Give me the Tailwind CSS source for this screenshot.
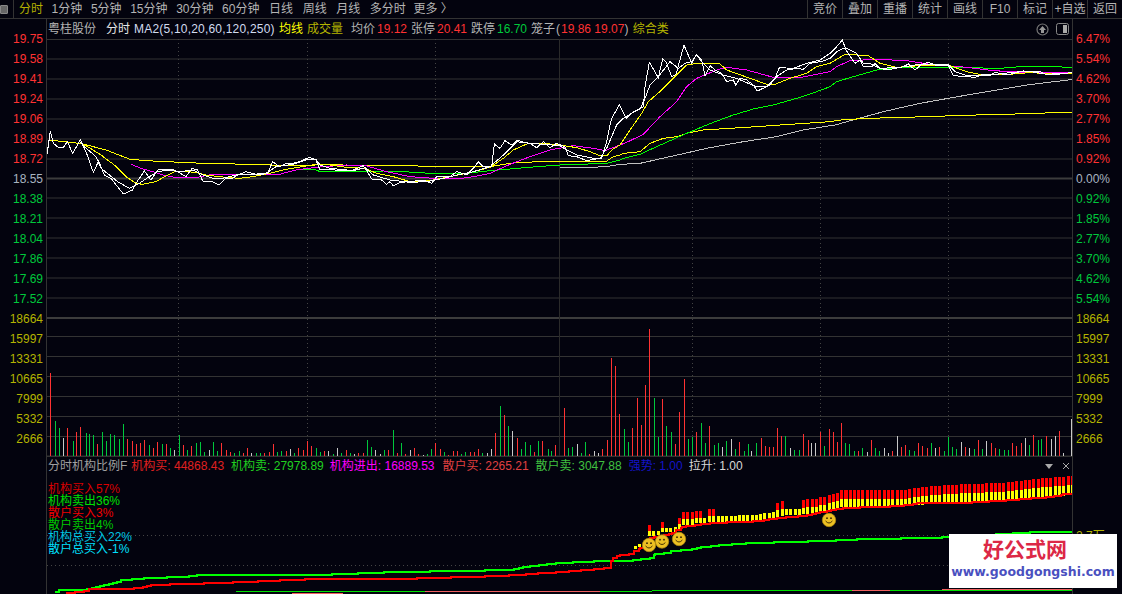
<!DOCTYPE html>
<html lang="zh-CN">
<head>
    <meta charset="UTF-8">
    <title>分时</title>
    <script src="https://cdn.jsdelivr.net/npm/@tailwindcss/browser@4"></script>
</head>
<body class="bg-[#03030e]">
<div class="relative w-[1122px] h-[594px] overflow-hidden bg-[#03030e] text-[12px] leading-[18px] text-[#b4b4b4] font-['Liberation_Sans','Noto_Sans_CJK_SC',sans-serif]">

    <!-- top bar -->
    <div class="flex h-[19px] border-b border-[#333]">
        <div class="flex items-center w-[14px] border-r border-[#333]">
            <div class="w-[8px] h-[9px] rounded-[1px] border border-[#888] bg-[#666]"></div>
        </div>
        <div class="flex gap-[8.6px] pl-[5px]">
            <span class="text-[#b4b000]">分时</span>
            <span>1分钟</span>
            <span>5分钟</span>
            <span>15分钟</span>
            <span>30分钟</span>
            <span>60分钟</span>
            <span class="ml-[1px]">日线</span>
            <span class="ml-[1px]">周线</span>
            <span class="ml-[1px]">月线</span>
            <span class="ml-[1px]">多分时</span>
            <span class="ml-[-1px]">更多 〉</span>
        </div>
        <div class="flex ml-auto">
            <span class="w-[35px] text-center border-l border-[#333]">竞价</span>
            <span class="w-[35px] text-center border-l border-[#333]">叠加</span>
            <span class="w-[35px] text-center border-l border-[#333]">重播</span>
            <span class="w-[35px] text-center border-l border-[#333]">统计</span>
            <span class="w-[35px] text-center border-l border-[#333]">画线</span>
            <span class="w-[35px] text-center border-l border-[#333]">F10</span>
            <span class="w-[35px] text-center border-l border-[#333]">标记</span>
            <span class="w-[35px] text-center border-l border-[#333]">+自选</span>
            <span class="w-[35px] text-center border-l border-[#333]">返回</span>
        </div>
    </div>

    <div class="flex h-[575px]">
        <!-- left axis -->
        <div class="w-[47px] shrink-0 border-r border-[#333] pt-[11px] pr-[3px] text-right">
            <div class="h-[20px] text-[#ff3232]">19.75</div>
            <div class="h-[20px] text-[#ff3232]">19.58</div>
            <div class="h-[20px] text-[#ff3232]">19.41</div>
            <div class="h-[20px] text-[#ff3232]">19.24</div>
            <div class="h-[20px] text-[#ff3232]">19.06</div>
            <div class="h-[20px] text-[#ff3232]">18.89</div>
            <div class="h-[20px] text-[#ff3232]">18.72</div>
            <div class="h-[20px] text-[#a8b4c0]">18.55</div>
            <div class="h-[20px] text-[#00c83c]">18.38</div>
            <div class="h-[20px] text-[#00c83c]">18.21</div>
            <div class="h-[20px] text-[#00c83c]">18.04</div>
            <div class="h-[20px] text-[#00c83c]">17.86</div>
            <div class="h-[20px] text-[#00c83c]">17.69</div>
            <div class="h-[20px] text-[#00c83c]">17.52</div>
            <div class="h-[20px] text-[#b4b400]">18664</div>
            <div class="h-[20px] text-[#b4b400]">15997</div>
            <div class="h-[20px] text-[#b4b400]">13331</div>
            <div class="h-[20px] text-[#b4b400]">10665</div>
            <div class="h-[20px] text-[#b4b400]">7999</div>
            <div class="h-[20px] text-[#b4b400]">5332</div>
            <div class="h-[20px] text-[#b4b400]">2666</div>
        </div>

        <!-- chart column -->
        <div class="flex flex-col w-[1025px] shrink-0">
            <div class="flex h-[20px] pl-[1px] pt-[1px] whitespace-pre">
                <span class="w-[58px] text-[#b4b4b4]">粤桂股份</span>
                <span class="w-[28px] text-[#e6e6e6]">分时</span>
                <span class="w-[145px] tracking-[0.2px] text-[#d2dcf0]">MA2(5,10,20,60,120,250)</span>
                <span class="w-[28px] text-[#ffff00]">均线</span>
                <span class="w-[44px] text-[#b4b400]">成交量</span>
                <span class="w-[26px]">均价</span>
                <span class="w-[34px] text-[#ff3232]">19.12</span>
                <span class="w-[26px]">张停</span>
                <span class="w-[34px] text-[#ff3232]">20.41</span>
                <span class="w-[26px]">跌停</span>
                <span class="w-[34px] text-[#00c83c]">16.70</span>
                <span class="w-[25px]">笼子</span>
                <span>(</span>
                <span class="ml-[1px] text-[#ff3232]">19.86 19.07</span>
                <span>) </span>
                <span class="ml-[1px] text-[#b4b400]">综合类</span>
                <div class="flex items-center gap-[7px] ml-auto pr-[3px] pb-[1px]">
                    <svg width="13" height="13" viewBox="0 0 13 13"><circle cx="6.5" cy="6.5" r="5.5" fill="none" stroke="#777" stroke-width="1.2"/><path d="M6.5 3 L10 7 H8 V10 H5 V7 H3 Z" fill="#999"/></svg>
                    <svg width="13" height="12" viewBox="0 0 13 12"><rect x=".5" y=".5" width="12" height="11" rx="2" fill="none" stroke="#888"/><rect x="7" y="2" width="4" height="8" fill="#aaa"/></svg>
                </div>
            </div>

            <svg id="main" class="block" width="1025" height="417" viewBox="47 39 1025 417"></svg>

            <div class="flex gap-[6px] h-[19px] pl-[1px] border-t border-[#333] whitespace-pre">
                <span class="text-[#a0a0a0] mr-[-2px]">分时机构比例F</span>
                <span class="text-[#e02020]">机构买: 44868.43</span>
                <span class="ml-[1px] text-[#20d020]">机构卖: 27978.89</span>
                <span class="text-[#ff00ff]">机构进出: 16889.53</span>
                <span class="ml-[2px] text-[#e04040]">散户买: 2265.21</span>
                <span class="ml-[1px] text-[#40c040]">散户卖: 3047.88</span>
                <span class="ml-[1px] text-[#1414c8]">强势: 1.00</span>
                <span class="text-[#d8d8d8]">拉升: 1.00</span>
                <div class="flex items-center gap-[9px] ml-auto pr-[2px]">
                    <span class="w-0 h-0 border-x-[4px] border-t-[5px] border-x-transparent border-t-[#aaa]"></span>
                    <svg width="8" height="8" viewBox="0 0 8 8"><path d="M1 1 L7 7 M7 1 L1 7" stroke="#aaa"/></svg>
                </div>
            </div>

            <div class="relative">
                <svg id="lower" class="block" width="1025" height="119" viewBox="47 475 1025 119"></svg>
                <div class="absolute left-[1px] top-[8px] leading-[12px]">
                    <div class="text-[#d80000]">机构买入57%</div>
                    <div class="text-[#00e000]">机构卖出36%</div>
                    <div class="text-[#f00000]">散户买入3%</div>
                    <div class="text-[#00c800]">散户卖出4%</div>
                    <div class="text-[#00c8e6]">机构总买入22%</div>
                    <div class="text-[#00e0ff]">散户总买入-1%</div>
                </div>
            </div>
        </div>

        <!-- right axis -->
        <div class="flex-1 border-l border-[#333] pt-[11px] pl-[3px]">
            <div class="h-[20px] text-[#ff3232]">6.47%</div>
            <div class="h-[20px] text-[#ff3232]">5.54%</div>
            <div class="h-[20px] text-[#ff3232]">4.62%</div>
            <div class="h-[20px] text-[#ff3232]">3.70%</div>
            <div class="h-[20px] text-[#ff3232]">2.77%</div>
            <div class="h-[20px] text-[#ff3232]">1.85%</div>
            <div class="h-[20px] text-[#ff3232]">0.92%</div>
            <div class="h-[20px] text-[#a8b4c0]">0.00%</div>
            <div class="h-[20px] text-[#00c83c]">0.92%</div>
            <div class="h-[20px] text-[#00c83c]">1.85%</div>
            <div class="h-[20px] text-[#00c83c]">2.77%</div>
            <div class="h-[20px] text-[#00c83c]">3.70%</div>
            <div class="h-[20px] text-[#00c83c]">4.62%</div>
            <div class="h-[20px] text-[#00c83c]">5.54%</div>
            <div class="h-[20px] text-[#b4b400]">18664</div>
            <div class="h-[20px] text-[#b4b400]">15997</div>
            <div class="h-[20px] text-[#b4b400]">13331</div>
            <div class="h-[20px] text-[#b4b400]">10665</div>
            <div class="h-[20px] text-[#b4b400]">7999</div>
            <div class="h-[20px] text-[#b4b400]">5332</div>
            <div class="h-[20px] text-[#b4b400]">2666</div>
            <div class="mt-[77px] text-[#b4b400]">2.7万</div>
        </div>
    </div>

    <!-- watermark -->
    <div class="absolute left-[949px] top-[534px] w-[168px] h-[54px] bg-white text-center">
        <div class="mt-[3px] pr-[16px] text-[21px] leading-[26px] font-bold text-[#dc2846]">好公式网</div>
        <div class="mt-[1px] text-[12.5px] leading-[16px] font-bold text-[#4a50c0] font-['DejaVu_Sans',sans-serif]">www.goodgongshi.com</div>
    </div>
</div>

<script>
    const SVGNS = 'http://www.w3.org/2000/svg';
    const main = document.getElementById('main');
    const lower = document.getElementById('lower');

    function add(parent, tag, attrs) {
        const el = document.createElementNS(SVGNS, tag);
        for (const k in attrs) el.setAttribute(k, attrs[k]);
        parent.appendChild(el);
        return el;
    }

    // grid
    const priceY = [39.5, 59, 79, 99, 119, 139, 159, 198, 218, 238, 258, 278, 298];
    const volY = [336.5, 356.5, 376.5, 396.5, 416.5, 436.5];
    priceY.concat(volY).forEach(y => add(main, 'line', { x1: 47, x2: 1072, y1: y, y2: y, stroke: '#333' }));
    [178.5, 318].forEach(y => add(main, 'line', { x1: 47, x2: 1072, y1: y, y2: y, stroke: '#3c3c3c', 'stroke-width': 2 }));
    add(main, 'line', { x1: 47, x2: 1072, y1: 456, y2: 456, stroke: '#333' });
    [178.5, 307.5, 435.5, 692.5, 820.5, 948.5].forEach(x => add(main, 'line', { x1: x, x2: x, y1: 39, y2: 456, stroke: '#444', 'stroke-dasharray': '1 3' }));
    add(main, 'line', { x1: 559.5, x2: 559.5, y1: 39, y2: 456, stroke: '#2a2a2a' });
    [535.5, 565.5].forEach(y => add(lower, 'line', { x1: 47, x2: 1072, y1: y, y2: y, stroke: '#444', 'stroke-dasharray': '1 3' }));

    // traced from the chart, grouped by the region they were read in
    function region(ox, oy, pts) {
        const out = [];
        for (let i = 0; i < pts.length; i += 2) out.push([ox + pts[i] / 3, oy + pts[i + 1] / 3]);
        return out;
    }
    function line(parts, color) {
        const pts = [];
        parts.forEach(([ox, oy, raw]) => region(ox, oy, raw).forEach(p => {
            if (!pts.length || p[0] > pts[pts.length - 1][0]) pts.push(p);
        }));
        add(main, 'polyline', {
            points: pts.map(p => p.join(',')).join(' '), fill: 'none', stroke: color,
            'stroke-width': 1, 'shape-rendering': 'crispEdges'
        });
    }
    const A = [46, 125], B = [310, 125], C = [590, 35], D = [820, 35];

    line([[...B, [750,127,840,127,890,125,930,118]],
          [...C, [0,400,70,398,150,385,240,365,350,340,460,320,560,305,640,285,720,272]],
          [...D, [45,270,110,252,190,230,300,205,385,190,470,175,620,150,760,133]]], '#c0c0c0');

    line([[...A, [10,45,100,55,130,62,180,75,250,102,300,107,360,110,430,113,470,115,660,119,700,122,810,120]],
          [...B, [0,113,50,118,100,120,470,125,540,125,600,115,640,112,745,108,890,108,910,95,930,90]],
          [...C, [0,378,50,378,70,360,100,355,150,350,180,325,220,310,260,305,290,295,340,285,420,280,500,275,600,268,720,260]],
          [...D, [0,262,70,254,150,250,240,247,330,245,420,241,520,239,620,236,760,231]]], '#ffff00');

    line([[...A, [765,132,810,135]],
          [...B, [30,140,160,140,220,138,280,140,360,145,470,145,540,137,600,132,680,125,750,120,890,115,930,105]],
          [...C, [0,383,50,383,100,370,150,358,200,335,290,295,370,262,430,240,490,222,550,210,620,190,680,170,720,155]],
          [...D, [0,165,50,140,100,125,170,105,240,97,385,97,540,100,600,95,690,95,760,97]]], '#00ff00');

    line([[...A, [255,118,285,130,320,140,350,150,385,157,450,158,490,150,560,148,640,150,700,148,750,135,810,127]],
          [...B, [0,125,40,125,110,120,170,123,230,140,300,155,370,160,440,162,490,155,540,145,600,118,660,95,720,75,790,62,850,70,885,77,930,60]],
          [...C, [0,340,30,345,70,340,110,322,160,298,210,245,260,200,290,155,320,130,380,105,410,97,470,105,550,127,630,128,720,110]],
          [...D, [0,118,50,95,90,77,170,73,260,77,330,88,440,97,520,107,610,112,760,113]]], '#ff00ff');

    line([[...A, [103,55,130,68,165,90,205,120,240,155,270,175,290,178,330,170,355,155,385,140,420,140,450,142,480,150,520,155,580,160,620,155,670,145,710,135,750,128,810,118]],
          [...B, [0,115,60,120,110,127,165,130,200,145,250,155,300,170,360,167,420,155,470,145,540,127,580,100,610,75,650,57,700,55,750,60,800,68,840,80,870,92,890,93,905,75,930,60]],
          [...C, [0,355,25,362,45,350,80,325,120,285,155,235,175,200,215,165,255,125,290,90,320,85,390,87,410,105,480,130,530,148,555,148,600,130,650,115,680,95,720,85]],
          [...D, [0,90,30,85,75,58,145,62,180,85,230,97,300,92,385,90,440,110,490,120,580,117,640,112,670,117,760,115]]], '#ffff00');

    line([[...A, [103,50,115,65,150,95,165,130,190,150,215,170,250,190,280,175,310,155,335,140,370,135,400,140,440,135,470,150,500,160,530,160,570,150,620,148,660,145,690,125,740,118,780,105,810,103]],
          [...B, [0,100,30,120,60,130,130,137,165,128,190,150,240,165,300,172,350,170,400,160,440,150,490,140,540,125,580,90,620,50,660,55,700,58,750,62,770,75,800,90,850,100,870,100,890,70,920,0]],
          [...C, [30,370,50,350,80,285,100,250,125,235,150,222,165,190,180,150,205,125,240,80,265,100,285,85,305,80,320,60,335,80,360,105,400,120,440,130,470,143,500,155,530,155,560,125,590,105,620,100,640,103,660,85,700,78,720,70]],
          [...D, [0,80,25,68,50,50,70,40,85,42,110,55,130,85,150,85,180,100,240,97,300,88,385,90,405,110,440,122,500,122,550,115,620,108,680,118,760,113]]], '#ffffff');

    line([[...A, [0,108,5,75,13,18,22,55,38,68,52,68,64,50,80,85,103,45,120,80,142,142,158,108,175,150,195,160,232,207,260,195,270,175,295,138,315,165,335,135,375,132,395,140,420,155,438,130,455,135,470,168,500,170,518,180,540,160,560,160,575,150,600,140,640,150,665,145,680,110,700,125,720,115,740,115,760,110,790,97,810,105]],
          [...B, [0,97,15,103,30,135,50,132,90,137,130,135,160,122,175,145,185,162,215,165,230,178,240,170,250,183,270,172,300,170,340,165,365,175,380,155,395,155,420,155,440,140,470,150,490,130,505,110,520,125,545,125,553,57,570,70,585,47,605,60,622,45,640,52,660,55,680,68,700,50,720,68,740,55,765,65,775,92,800,95,830,107,850,103,875,100,890,50,900,0]],
          [...C, [65,250,88,210,108,250,130,230,160,215,165,155,178,82,205,128,218,72,228,80,245,125,258,118,282,30,305,85,320,58,335,75,345,122,360,92,375,105,395,115,410,140,430,135,437,150,450,130,470,135,490,150,502,168,540,150,555,130,568,98,610,100,650,85,690,75,720,55]],
          [...D, [0,75,20,65,30,45,50,35,67,15,78,45,105,85,120,75,130,95,155,95,165,85,180,100,200,105,250,95,265,87,285,105,305,88,325,82,345,90,385,92,400,122,465,127,490,118,510,120,525,112,560,120,610,108,660,110,680,120,720,117,760,112]]], '#ffffff');

    // volume bars: x, top, colour
    const volColors = { r: '#ff3232', g: '#00c83c', w: '#c8c8c8' };
    const volA = '141:190r 155:333g 166:354g 177:384w 188:354r 203:393g 214:366r 225:351r 240:369g 250:372g 261:375g 272:402r 286:366g 298:393g 309:372g 320:375g 334:387g 345:342g 356:387r 370:393r 381:402r 392:399r 404:390r 418:405g 429:414r 440:396r 454:402g 466:402r 477:414g 488:420w 502:375g 513:405r 524:420g 536:408r 550:399g 561:396g 572:426g 586:420w 597:396g 608:423g 619:399r 634:420r 645:426r 656:429g 670:423g 681:429r 692:414r 704:429w 718:429g 729:429g 740:429r 754:426r 765:402r 776:426g 787:423g 801:423r 812:417w 823:429g 835:414r 849:420r 860:393r 871:408r 886:414g 897:426g 908:423r 919:423w 933:432g 944:414w 955:429g 969:420r 981:429g 992:432w 1003:429r 1017:429r 1028:390g 1039:411g 1050:420w 1065:432w 1076:420g 1087:420r 1101:360g 1112:429r 1123:399g 1135:432r 1149:420w 1160:414r 1171:432r 1185:435w 1196:432g 1207:417g 1219:399r 1233:417r 1244:426g 1255:435r 1269:423r 1280:423r 1291:432g 1303:426g 1317:426r 1328:426r 1339:417r 1350:429g 1364:429w 1375:417w 1387:369r 1401:288g 1412:315r 1423:348g 1434:363w 1448:384r 1459:417g 1471:396g 1485:405g 1496:426r 1507:393g 1518:393r 1533:417g 1544:423g 1555:405r';
    const volB = '12:294r 23:414g 34:411g 48:402w 59:429g 71:396g 82:432r 96:423w 107:429w 118:417r 132:390r 143:144r 154:168r 166:312r 180:357g 191:396g 202:354r 216:264r 227:345r 238:225r 249:57r 263:264g 274:381g 285:267r 297:348g 310:366g 322:402r 333:306r 347:207r 358:387g 369:381g 380:366r 394:339g 405:399g 417:348r 431:405g 442:399g 453:411w 464:393g 478:387w 489:417g 500:396r 514:423g 525:402g 536:423w 548:399g 562:384r 573:408r 585:411r 596:411r 608:354r 620:378r 631:378g 645:414w 656:420g 668:420g 679:372r 693:390r 704:399w 715:399w 729:366r 740:408g 752:357r 763:366r 776:396r 788:339r 799:399g 810:402g 824:423g 835:423r 846:414g 860:426w 871:390r 882:414g 894:423g 908:414w 919:429w 930:423r 944:378w 955:411r 966:405r 978:420g 991:423g 1002:399r 1014:408r 1027:414r 1039:399g 1050:414w 1061:411r 1075:423g 1086:381g 1097:411g 1108:417g 1122:396w 1134:411r 1145:414w 1159:417g 1170:390r 1181:417g 1192:393w 1206:399r 1217:414r 1229:417g 1243:420g 1254:420g 1265:399r 1276:408r 1290:399r 1301:384w 1312:405g 1323:375r 1337:390g 1348:387g 1360:378r 1374:387w 1385:378w 1396:363r 1407:429w 1432:327w';
    [[0, volA], [560, volB]].forEach(([ox, list]) => list.split(' ').forEach(item => {
        const zx = parseInt(item), zy = parseInt(item.split(':')[1]), c = item.slice(-1);
        const top = Math.round(310 + zy / 3);
        add(main, 'rect', { x: Math.round(ox + zx / 2.8), y: top, width: 1, height: 456 - top, fill: volColors[c] });
    }));

    // lower panel step lines, one step per minute
    function step(pts, color) {
        let d = 'M' + pts[0][0] + ' ' + pts[0][1];
        for (let i = 1; i < pts.length; i++) {
            const [x0, y0] = pts[i - 1], [x1, y1] = pts[i];
            for (let x = x0 + 4.275; x < x1; x += 4.275) {
                d += ' H' + Math.round(x) + ' V' + Math.round(y0 + (y1 - y0) * (x - x0) / (x1 - x0));
            }
            d += ' H' + x1 + ' V' + y1;
        }
        add(lower, 'path', { d, fill: 'none', stroke: color, 'stroke-width': 2, 'shape-rendering': 'crispEdges' });
    }

    // red/yellow stacks: centre x, yellow top, red top (0 = none), bottom
    const stacks = [[15,228,0,237],[28,222,0,232],[58,183,165,198],[71,183,0,198],[84,183,0,196],[97,174,156,186],[108,174,0,187],[122,174,0,187],[136,171,0,187],[148,162,144,178],[160,147,126,165],[173,147,126,165],[187,147,126,165],[199,143,123,160],[212,143,123,160],[224,144,0,160],[238,137,117,157],[251,137,117,157],[264,138,0,156],[277,138,0,156],[290,138,0,156],[303,138,0,156],[315,138,0,156],[328,135,0,154],[340,135,0,154],[353,135,0,154],[367,135,0,154],[380,135,0,153],[392,132,0,150],[404,129,0,148],[418,129,0,148],[431,125,0,146],[443,120,99,140],[457,117,93,137],[469,117,0,136],[482,117,0,136],[495,117,0,136],[508,117,0,134],[520,114,90,133],[533,111,87,131],[546,111,87,131],[559,111,87,131],[572,105,81,128],[584,105,81,128],[598,100,75,123],[611,96,72,120],[623,93,69,118],[635,87,60,112],[650,87,60,110]];
    stacks.forEach(([zx, yt, rt, b]) => {
        const x = Math.round(630 + zx / 3 - 1.5), top = 470 + yt / 3, bot = 470 + b / 3;
        add(lower, 'rect', { x, y: top, width: 3, height: bot - top, fill: '#ffff00', 'shape-rendering': 'crispEdges' });
        if (rt) add(lower, 'rect', { x, y: 470 + rt / 3, width: 3, height: (yt - rt) / 3, fill: '#ff0000', 'shape-rendering': 'crispEdges' });
    });
    const lerp = (tbl, x) => {
        for (let i = 1; i < tbl.length; i++) if (x <= tbl[i][0]) {
            const [x0, y0] = tbl[i - 1], [x1, y1] = tbl[i];
            return y0 + (y1 - y0) * (x - x0) / (x1 - x0);
        }
        return tbl[tbl.length - 1][1];
    };
    const yellowTop = [[840,499],[900,499],[933,495],[967,493],[1000,492],[1033,488],[1072,485]];
    const stackBottom = [[840,507],[900,506],[933,504],[967,503],[1000,501],[1033,498],[1072,495]];
    for (let x = 840; x < 1071; x += 4.275) {
        const rx = Math.round(x), t = Math.round(lerp(yellowTop, x)), b = Math.round(lerp(stackBottom, x));
        add(lower, 'rect', { x: rx, y: t, width: 3, height: b - t, fill: '#ffff00', 'shape-rendering': 'crispEdges' });
        add(lower, 'rect', { x: rx, y: t - 9, width: 3, height: 9, fill: '#ff0000', 'shape-rendering': 'crispEdges' });
    }

    step([[55,592],[60,590],[83,590],[100,586],[123,580],[150,578],[180,577],[200,575],[315,575],[367,573],[400,572],[510,570],[530,566],[560,563],[600,561],[624,561],[650,558],[655,554],[667,553],[672,551],[688,550],[702,547],[733,544],[757,543],[823,541],[863,539],[933,538],[949,537],[1038,532],[1072,532]], '#00ff00');
    step([[66,593],[80,592],[90,589],[130,589],[153,585],[220,583],[313,579],[400,579],[500,576],[560,572],[600,569],[607,568],[613,558],[620,555],[630,554],[640,548],[650,538],[660,536],[672,533],[682,527],[697,525],[710,523],[740,522],[760,521],[777,518],[803,516],[827,511],[843,508],[873,507],[900,506],[920,503],[963,503],[980,502],[1010,500],[1037,498],[1057,496],[1063,494],[1072,494]], '#ff0000');

    // bottom pair of lines
    add(lower, 'line', { x1: 236, x2: 1072, y1: 592, y2: 590, stroke: '#00e000', 'shape-rendering': 'crispEdges' });
    [[292, 343], [425, 600], [852, 890], [942, 1072]].forEach(([a, b]) => {
        const y = b < 400 ? 593 : b < 700 ? 591 : b < 900 ? 590 : 589;
        add(lower, 'line', { x1: a, x2: b, y1: y, y2: y, stroke: '#f06060', 'shape-rendering': 'crispEdges' });
    });

    // smiley marks
    [[649, 545], [662, 541.5], [679, 539], [829, 520]].forEach(([x, y]) => {
        const g = add(lower, 'g', { transform: `translate(${x} ${y})` });
        add(g, 'circle', { r: 6.7, fill: '#ecc023', stroke: '#b08a10', 'stroke-width': 0.8 });
        add(g, 'circle', { cx: -2, cy: -1.8, r: 0.9, fill: '#332200' });
        add(g, 'circle', { cx: 2, cy: -1.8, r: 0.9, fill: '#332200' });
        add(g, 'path', { d: 'M-3.4 1 Q0 5 3.4 1', fill: 'none', stroke: '#332200', 'stroke-width': 0.9 });
    });
</script>
</body>
</html>
